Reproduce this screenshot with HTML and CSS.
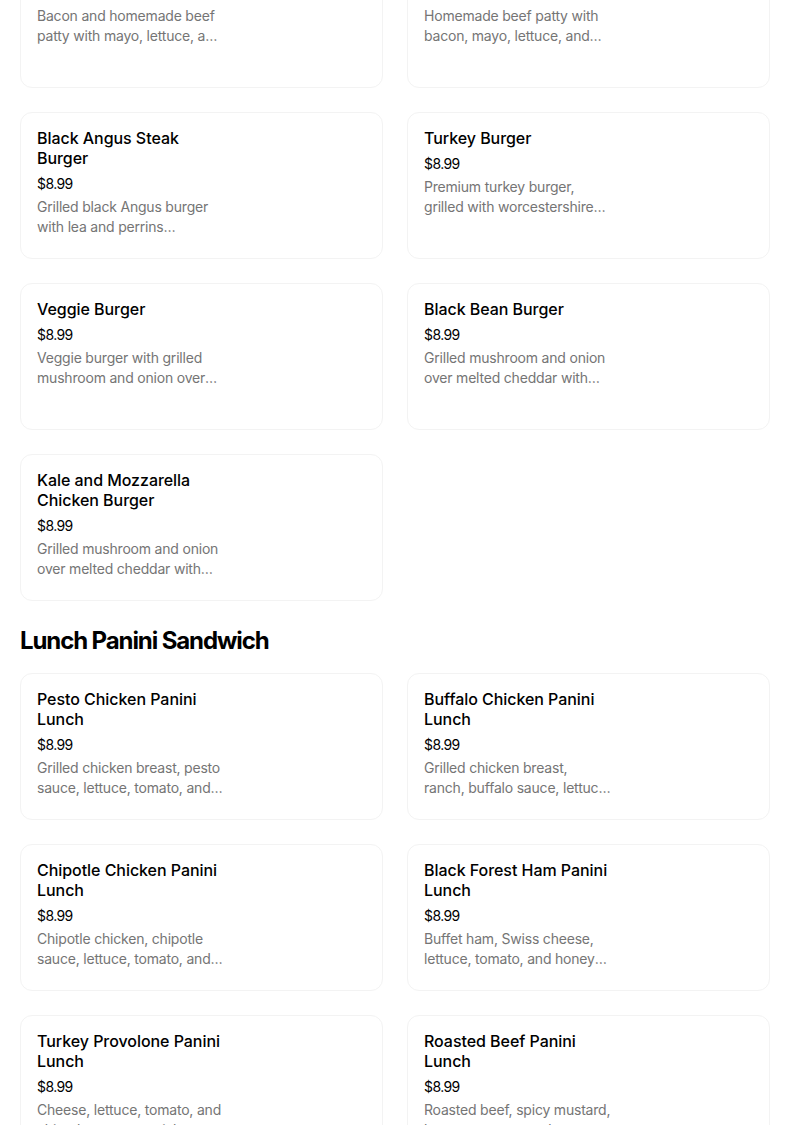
FILE: index.html
```html
<!DOCTYPE html>
<html lang="en">
<head>
<meta charset="utf-8">
<title>Menu</title>
<link rel="stylesheet" href="styles.css">
</head>
<body>
<main class="menu">
  <section class="section">
    <div class="grid">
      <div class="card"><div class="info"><div class="name">Bacon Burger</div><div class="price">$8.99</div><div class="desc">Bacon and homemade beef patty with mayo, lettuce, and tomato on a brioche bun.</div></div></div>
      <div class="card"><div class="info"><div class="name">Bacon Cheeseburger</div><div class="price">$8.99</div><div class="desc">Homemade beef patty with bacon, mayo, lettuce, and tomato on a brioche bun.</div></div></div>
      <div class="card"><div class="info"><div class="name">Black Angus Steak Burger</div><div class="price">$8.99</div><div class="desc">Grilled black Angus burger with lea and perrins worcestershire sauce.</div></div></div>
      <div class="card"><div class="info"><div class="name">Turkey Burger</div><div class="price">$8.99</div><div class="desc">Premium turkey burger, grilled with worcestershire sauce, lettuce and tomato.</div></div></div>
      <div class="card"><div class="info"><div class="name">Veggie Burger</div><div class="price">$8.99</div><div class="desc">Veggie burger with grilled mushroom and onion over melted cheddar.</div></div></div>
      <div class="card"><div class="info"><div class="name">Black Bean Burger</div><div class="price">$8.99</div><div class="desc">Grilled mushroom and onion over melted cheddar with lettuce and tomato.</div></div></div>
      <div class="card"><div class="info"><div class="name">Kale and Mozzarella Chicken Burger</div><div class="price">$8.99</div><div class="desc">Grilled mushroom and onion over melted cheddar with lettuce and tomato.</div></div></div>
    </div>
  </section>
  <section class="section">
    <h2 class="section-title">Lunch Panini Sandwich</h2>
    <div class="grid">
      <div class="card"><div class="info"><div class="name">Pesto Chicken Panini Lunch</div><div class="price">$8.99</div><div class="desc">Grilled chicken breast, pesto sauce, lettuce, tomato, and mozzarella.</div></div></div>
      <div class="card"><div class="info"><div class="name">Buffalo Chicken Panini Lunch</div><div class="price">$8.99</div><div class="desc">Grilled chicken breast, ranch, buffalo sauce, lettuce and tomato.</div></div></div>
      <div class="card"><div class="info"><div class="name">Chipotle Chicken Panini Lunch</div><div class="price">$8.99</div><div class="desc">Chipotle chicken, chipotle sauce, lettuce, tomato, and pepper jack.</div></div></div>
      <div class="card"><div class="info"><div class="name">Black Forest Ham Panini Lunch</div><div class="price">$8.99</div><div class="desc">Buffet ham, Swiss cheese, lettuce, tomato, and honey mustard.</div></div></div>
      <div class="card"><div class="info"><div class="name">Turkey Provolone Panini Lunch</div><div class="price">$8.99</div><div class="desc">Cheese, lettuce, tomato, and chipotle sauce on ciabatta.</div></div></div>
      <div class="card"><div class="info"><div class="name">Roasted Beef Panini Lunch</div><div class="price">$8.99</div><div class="desc">Roasted beef, spicy mustard, lettuce, tomato, and cheddar.</div></div></div>
    </div>
  </section>
</main>
</body>
</html>
```

FILE: styles.css
```css
* { box-sizing: border-box; }
html, body {
  margin: 0;
  padding: 0;
  background: #ffffff;
  overflow: hidden;
}
body {
  font-family: Inter, "Liberation Sans", Arial, sans-serif;
  color: #000000;
}
.menu {
  width: 750px;
  margin: -59px 0 0 20px;
}
.section-title {
  margin: 24px 0 16px;
  font-size: 24px;
  line-height: 32px;
  font-weight: 700;
  letter-spacing: -1.1px;
}
.grid {
  display: grid;
  grid-template-columns: 363px 363px;
  column-gap: 24px;
  row-gap: 24px;
}
.card {
  height: 147px;
  border: 1px solid #f3f3f3;
  border-radius: 12px;
  padding: 15px 16px;
  overflow: hidden;
}
.info {
  width: 187px;
}
.name {
  font-size: 16px;
  line-height: 20px;
  font-weight: 500;
  color: #000;
  letter-spacing: -0.05px;
}
.price {
  margin-top: 6px;
  font-size: 14px;
  line-height: 20px;
  color: #000;
  letter-spacing: -0.6px;
}
.desc {
  margin-top: 3px;
  font-size: 14px;
  line-height: 20px;
  color: #757575;
  letter-spacing: -0.2px;
  display: -webkit-box;
  -webkit-line-clamp: 2;
  -webkit-box-orient: vertical;
  overflow: hidden;
}
```
